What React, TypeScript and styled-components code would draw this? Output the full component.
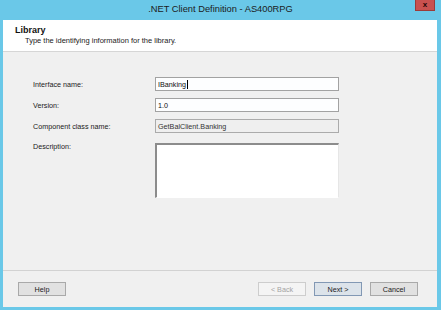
import styled, { createGlobalStyle } from 'styled-components';

const GlobalStyle = createGlobalStyle`
  html, body {
    margin: 0;
    padding: 0;
    background: #6ac8e8;
  }
  body {
    font-family: "Liberation Sans", Arial, sans-serif;
  }
`;

const Window = styled.div`
  width: 441px;
  height: 310px;
  background: #6ac8e8;
  display: flex;
  flex-direction: column;
  box-sizing: border-box;
`;

const TitleBar = styled.div`
  height: 20px;
  display: grid;
  grid-template-columns: 1fr auto 1fr;
  align-items: start;
`;

const Title = styled.div`
  grid-column: 2;
  font-size: 9.3px;
  line-height: 18px;
  color: #1b1b1b;
  white-space: nowrap;
`;

const CloseButton = styled.div`
  grid-column: 3;
  justify-self: end;
  margin-right: 6px;
  width: 20px;
  height: 11px;
  box-sizing: border-box;
  background: #c9514f;
  border: 1px solid #9c3b39;
  border-top: none;
  display: flex;
  align-items: center;
  justify-content: center;
  font-size: 8px;
  font-weight: bold;
  color: #1e0505;
  line-height: 1;
`;

const Body = styled.div`
  flex: 1;
  margin: 0 4px 3px 3px;
  background: #f0f0f0;
  display: flex;
  flex-direction: column;
`;

const Header = styled.div`
  height: 32px;
  box-sizing: border-box;
  background: #ffffff;
  border-bottom: 1px solid #d6d6d6;
  padding: 5px 0 0 12px;
`;

const HeaderTitle = styled.div`
  font-size: 9px;
  font-weight: bold;
  line-height: 11px;
  color: #111;
`;

const HeaderText = styled.div`
  font-size: 7.5px;
  line-height: 10px;
  color: #222;
  margin-left: 10px;
`;

const Form = styled.div`
  flex: 1;
  display: grid;
  grid-template-columns: 122px 184px;
  grid-auto-rows: 14px;
  row-gap: 7px;
  align-content: start;
  padding: 25px 0 0 30px;
`;

const Label = styled.div<{ $top?: boolean }>`
  font-size: 7.2px;
  color: #1a1a1a;
  display: flex;
  align-items: ${(p) => (p.$top ? 'flex-start' : 'center')};
  padding-top: ${(p) => (p.$top ? '2px' : '0')};
`;

const TextBox = styled.div<{ $disabled?: boolean }>`
  box-sizing: border-box;
  height: 14px;
  border: 1px solid ${(p) => (p.$disabled ? '#ababab' : '#a2a2a2')};
  background: ${(p) => (p.$disabled ? '#efefef' : '#fdfeff')};
  font-size: 7.2px;
  color: ${(p) => (p.$disabled ? '#333' : '#111')};
  display: flex;
  align-items: center;
  padding-left: 2px;
`;

const Caret = styled.span`
  display: inline-block;
  width: 1px;
  height: 9px;
  background: #000;
  margin-left: 1px;
`;

const TextArea = styled.div`
  grid-row: span 3;
  margin-top: 3px;
  height: 55px;
  box-sizing: border-box;
  background: #ffffff;
  border-style: solid;
  border-width: 2px 1px 1px 2px;
  border-color: #8c8c8c #e6e6e6 #ffffff #8c8c8c;
`;

const Spacer = styled.div`
  grid-row: span 3;
`;

const Footer = styled.div`
  border-top: 1px solid #d2d2d2;
  height: 14px;
  padding: 11px 19px 11px 15px;
  display: flex;
  align-items: center;
  gap: 8px;
`;

const Button = styled.div<{ $variant?: 'default' | 'disabled' }>`
  width: 48px;
  height: 14px;
  box-sizing: border-box;
  font-size: 7.2px;
  display: flex;
  align-items: center;
  justify-content: center;
  border: 1px solid
    ${(p) =>
      p.$variant === 'disabled'
        ? '#cdcdcd'
        : p.$variant === 'default'
          ? '#8298b4'
          : '#a9a9a9'};
  background: ${(p) =>
    p.$variant === 'disabled'
      ? '#f4f4f4'
      : p.$variant === 'default'
        ? '#dce3ea'
        : '#e1e1e1'};
  color: ${(p) => (p.$variant === 'disabled' ? '#a3a3a3' : '#1a1a1a')};
`;

const Grow = styled.div`
  flex: 1;
`;

export default function App() {
  return (
    <>
      <GlobalStyle />
      <Window>
        <TitleBar>
          <Title>.NET Client Definition - AS400RPG</Title>
          <CloseButton>x</CloseButton>
        </TitleBar>
        <Body>
          <Header>
            <HeaderTitle>Library</HeaderTitle>
            <HeaderText>Type the identifying information for the library.</HeaderText>
          </Header>
          <Form>
            <Label>Interface name:</Label>
            <TextBox>
              IBanking
              <Caret />
            </TextBox>
            <Label>Version:</Label>
            <TextBox>1.0</TextBox>
            <Label>Component class name:</Label>
            <TextBox $disabled>GetBalClient.Banking</TextBox>
            <Label $top>Description:</Label>
            <TextArea />
            <Spacer />
          </Form>
          <Footer>
            <Button>Help</Button>
            <Grow />
            <Button $variant="disabled">&lt; Back</Button>
            <Button $variant="default">Next &gt;</Button>
            <Button>Cancel</Button>
          </Footer>
        </Body>
      </Window>
    </>
  );
}
